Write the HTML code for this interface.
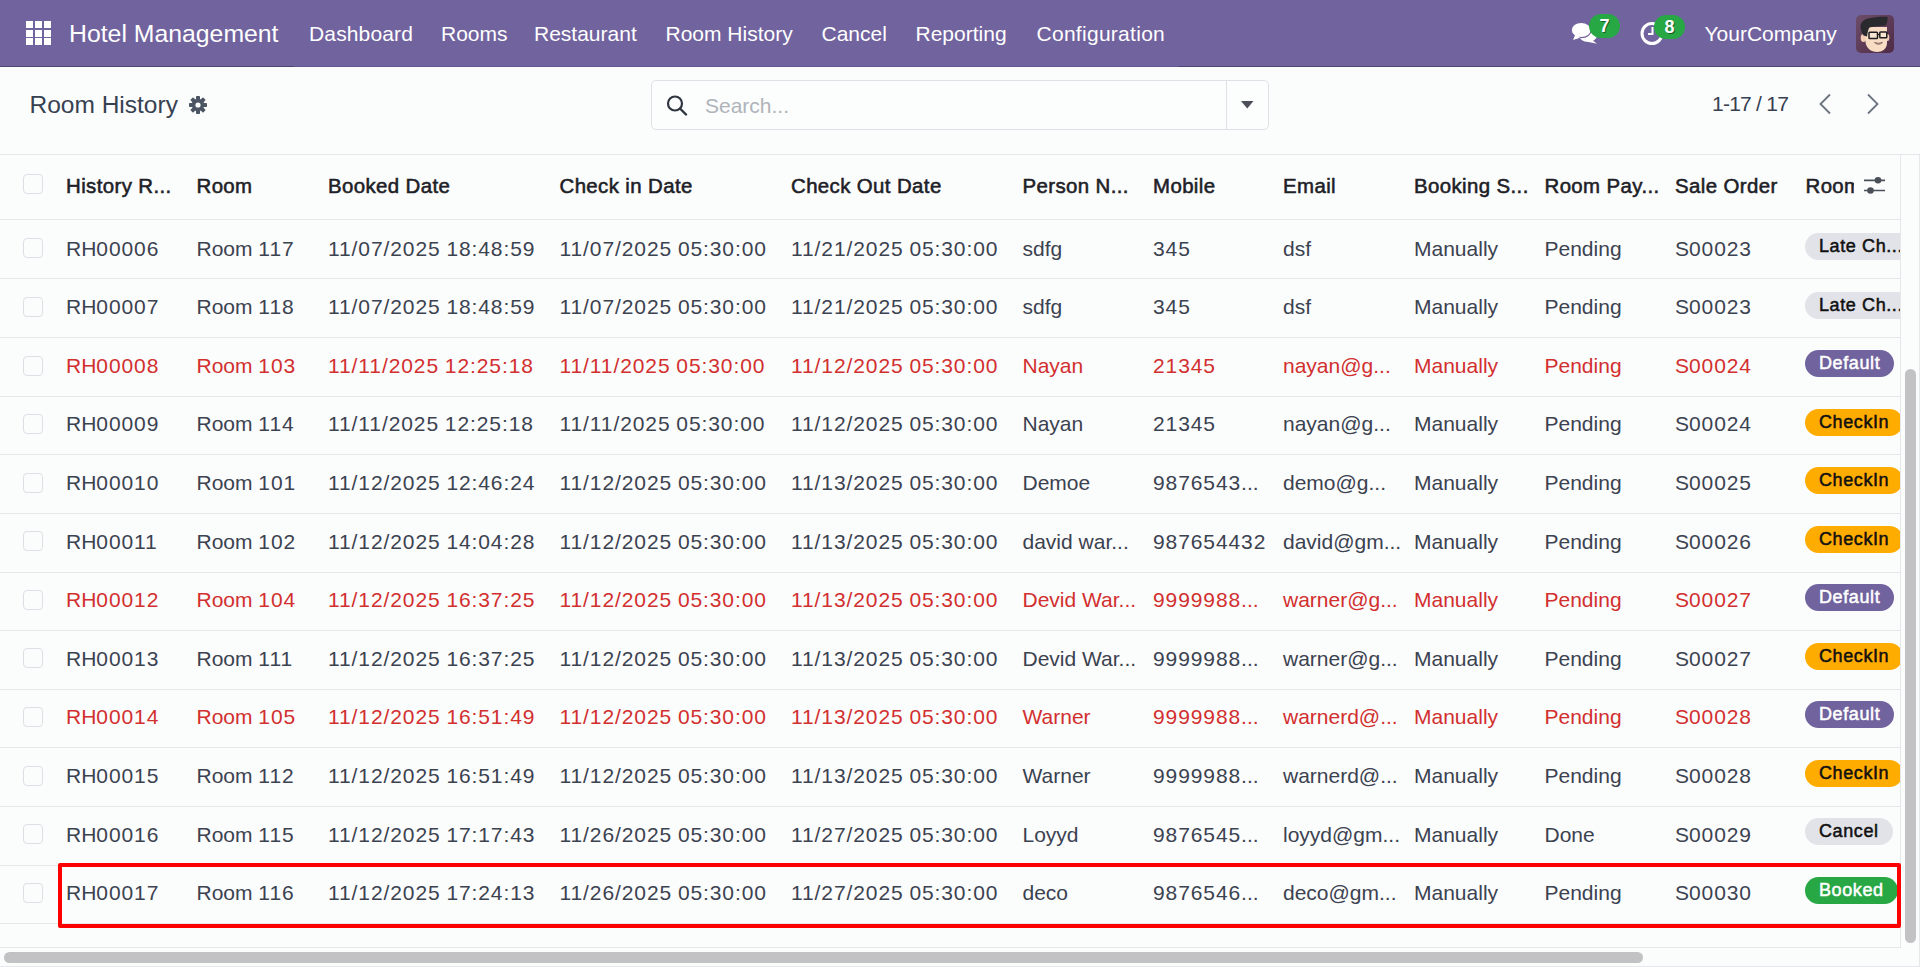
<!DOCTYPE html><html><head><meta charset="utf-8"><style>
*{box-sizing:border-box;margin:0;padding:0}
html,body{width:1920px;height:967px;overflow:hidden;background:#fbfcfc;font-family:"Liberation Sans",sans-serif;color:#3b4250}
.a{position:absolute;white-space:nowrap}
.nav{position:absolute;left:0;top:0;width:1920px;height:67px;background:#71639e}
.nt{position:absolute;color:#fff;font-size:21px;top:22px;line-height:24px}
.brand{font-size:24.8px;top:20px;line-height:28px}
.badge7{position:absolute;background:#28a745;border-radius:12px;color:#fff;font-weight:700;font-size:18px;text-align:center;line-height:24px;height:24px;width:31px;text-shadow:1px 1px 0 rgba(0,0,0,.45)}
.hl{position:absolute;left:0;width:1900px;height:1px;background:#e5e7eb}
.th{position:absolute;font-weight:400;font-size:20.4px;color:#1d2026;-webkit-text-stroke:0.55px #1d2026;letter-spacing:0.4px;top:173.5px;line-height:24px}
.td{position:absolute;font-size:21px;line-height:24px}
.cb{position:absolute;left:23px;width:20px;height:20px;border:1px solid #dcdfe4;border-radius:4px;background:transparent}
.bd{position:absolute;left:1805px;height:27px;border-radius:14px;font-weight:400;font-size:18px;line-height:27px;padding:0 14px;letter-spacing:0.6px;-webkit-text-stroke:0.5px currentColor}
.gray{background:#e1e3e8;color:#111}
.purple{background:#71639e;color:#fff}
.orange{background:#ffac00;color:#111}
.green{background:#28a745;color:#fff}
.red{color:#d22f2f}
.d{letter-spacing:0.9px}
</style></head><body>
<div class="nav"></div>
<div class="a" style="left:0;top:66px;width:294px;height:1px;background:#4f4573"></div>
<div class="a" style="left:294px;top:66px;width:885px;height:1px;background:#655892"></div>
<div class="a" style="left:1179px;top:66px;width:741px;height:1px;background:#4f4573"></div>
<svg class="a" style="left:26px;top:21px" width="26" height="26" viewBox="0 0 26 26"><rect x="0" y="0" width="7" height="7" fill="#fff"/><rect x="9" y="0" width="7" height="7" fill="#fff"/><rect x="18" y="0" width="7" height="7" fill="#fff"/><rect x="0" y="9" width="7" height="7" fill="#fff"/><rect x="9" y="9" width="7" height="7" fill="#fff"/><rect x="18" y="9" width="7" height="7" fill="#fff"/><rect x="0" y="17" width="7" height="7" fill="#fff"/><rect x="9" y="17" width="7" height="7" fill="#fff"/><rect x="18" y="17" width="7" height="7" fill="#fff"/></svg>
<div class="nt brand" style="left:69px">Hotel Management</div>
<div class="nt" style="left:309px;letter-spacing:0.15px">Dashboard</div>
<div class="nt" style="left:441px;letter-spacing:0px">Rooms</div>
<div class="nt" style="left:534px;letter-spacing:0px">Restaurant</div>
<div class="nt" style="left:665.5px;letter-spacing:0px">Room History</div>
<div class="nt" style="left:821.5px;letter-spacing:0px">Cancel</div>
<div class="nt" style="left:915.5px;letter-spacing:0px">Reporting</div>
<div class="nt" style="left:1036.5px;letter-spacing:0.28px">Configuration</div>
<svg class="a" style="left:1571px;top:22px" width="28" height="23" viewBox="0 0 28 23">
<ellipse cx="17" cy="13.3" rx="9" ry="6.5" fill="#fff"/><path d="M20.5 17.5 L26 21.8 L15 19.5 Z" fill="#fff"/>
<path d="M4.5 13 L2.3 17.8 L10 15.5 Z" fill="#fff"/><ellipse cx="10.2" cy="8" rx="10" ry="7.7" fill="#fff" stroke="#71639e" stroke-width="1.2"/><path d="M4.2 12.8 L2.3 17.8 L9.5 15.2 Z" fill="#fff"/></svg>
<div class="badge7" style="left:1589px;top:14px">7</div>
<svg class="a" style="left:1639.8px;top:20.6px" width="25" height="25" viewBox="0 0 25 25">
<circle cx="12" cy="12.5" r="10" fill="none" stroke="#fff" stroke-width="3"/><path d="M12.5 6 V13 H8" fill="none" stroke="#fff" stroke-width="2"/></svg>
<div class="badge7" style="left:1654px;top:15px">8</div>
<div class="nt" style="left:1704.5px">YourCompany</div>
<svg class="a" style="left:1856px;top:15px" width="38" height="38" viewBox="0 0 38 38">
<defs><linearGradient id="ag" x1="0" y1="0" x2="1" y2="1"><stop offset="0" stop-color="#6d4d69"/><stop offset="1" stop-color="#4f2b45"/></linearGradient></defs>
<rect width="38" height="38" rx="5" fill="url(#ag)"/>
<ellipse cx="7.5" cy="23" rx="2.8" ry="4" fill="#f3cdb5"/>
<ellipse cx="31.5" cy="22.5" rx="1.8" ry="3.5" fill="#f3cdb5"/>
<path d="M9.5 12 H31 V28 C31 34 26 37 21 37 C15 37 10 33 9.5 27 Z" fill="#f8dcc3"/>
<path d="M4.5 11 C5 7 8 4.5 12 3.5 C18 2 26 1.5 31.5 1.8 C32 5 31 8.5 29.5 10.5 C24 10.5 18 11.5 13.5 12.5 C12 14.5 11.5 18 11 21.5 L7.5 20.5 C5.5 17 4.3 14 4.5 11 Z" fill="#2a292e"/>
<rect x="13" y="17.3" width="8.5" height="6.2" rx="0.8" fill="#fff" fill-opacity=".25" stroke="#1e1e22" stroke-width="1.5"/>
<rect x="23.8" y="17" width="7" height="5.8" rx="0.8" fill="#fff" fill-opacity=".25" stroke="#1e1e22" stroke-width="1.5"/>
<path d="M21.5 19.5 H23.8" stroke="#1e1e22" stroke-width="1.2"/>
<path d="M18.5 27.5 Q22.5 31 26.5 27.5 Q22.5 29 18.5 27.5 Z" fill="#b9b2ad" stroke="#7a5b55" stroke-width=".8"/>
</svg>
<div class="a" style="left:29.5px;top:90.5px;font-size:24.5px;line-height:28px;color:#374151">Room History</div>
<svg class="a" style="left:189px;top:96px" width="18" height="18" viewBox="0 0 18 18">
<g fill="#4b5563" transform="translate(9 9)">
<circle r="6.2"/>
<rect x="-2" y="-9" width="4" height="4" rx="0.8" transform="rotate(0)"/><rect x="-2" y="-9" width="4" height="4" rx="0.8" transform="rotate(45)"/><rect x="-2" y="-9" width="4" height="4" rx="0.8" transform="rotate(90)"/><rect x="-2" y="-9" width="4" height="4" rx="0.8" transform="rotate(135)"/><rect x="-2" y="-9" width="4" height="4" rx="0.8" transform="rotate(180)"/><rect x="-2" y="-9" width="4" height="4" rx="0.8" transform="rotate(225)"/><rect x="-2" y="-9" width="4" height="4" rx="0.8" transform="rotate(270)"/><rect x="-2" y="-9" width="4" height="4" rx="0.8" transform="rotate(315)"/>
</g><circle cx="9" cy="9" r="2.6" fill="#fbfcfc"/></svg>
<div class="a" style="left:651px;top:80px;width:618px;height:50px;border:1px solid #dfe1e6;border-radius:5px;background:#fcfdfd"></div>
<div class="a" style="left:1226px;top:80px;width:1px;height:50px;background:#dfe1e6"></div>
<svg class="a" style="left:666px;top:95px" width="22" height="21" viewBox="0 0 22 21">
<circle cx="9" cy="8.5" r="7" fill="none" stroke="#2f3640" stroke-width="2.2"/><path d="M14 13.5 L20 19.5" stroke="#2f3640" stroke-width="2.4" stroke-linecap="round"/></svg>
<div class="a" style="left:705px;top:93.6px;font-size:21px;line-height:24px;color:#b0b3ba">Search...</div>
<svg class="a" style="left:1241px;top:101px" width="13" height="8" viewBox="0 0 13 8"><path d="M0 0 H12.5 L6.25 7.5 Z" fill="#4a4f59"/></svg>
<div class="a" style="left:1712px;top:92px;font-size:21px;line-height:24px;color:#374151;letter-spacing:-0.75px">1-17 / 17</div>
<svg class="a" style="left:1818px;top:93px" width="14" height="22" viewBox="0 0 14 22"><path d="M12 1.5 L2.5 11 L12 20.5" fill="none" stroke="#6b7280" stroke-width="1.8"/></svg>
<svg class="a" style="left:1866px;top:93px" width="14" height="22" viewBox="0 0 14 22"><path d="M2 1.5 L11.5 11 L2 20.5" fill="none" stroke="#6b7280" stroke-width="1.8"/></svg>
<div class="hl" style="top:154px;width:1920px;z-index:2"></div>
<div class="hl" style="top:219px"></div>
<div class="cb" style="top:174px"></div>
<div class="th" style="left:66px">History R...</div>
<div class="th" style="left:196.5px">Room</div>
<div class="th" style="left:328px">Booked Date</div>
<div class="th" style="left:559.5px">Check in Date</div>
<div class="th" style="left:791px">Check Out Date</div>
<div class="th" style="left:1022.5px">Person N...</div>
<div class="th" style="left:1153px">Mobile</div>
<div class="th" style="left:1283px">Email</div>
<div class="th" style="left:1414px">Booking S...</div>
<div class="th" style="left:1544.5px">Room Pay...</div>
<div class="th" style="left:1675px">Sale Order</div>
<div class="th" style="left:1805.5px;width:48px;overflow:hidden">Room</div>
<svg class="a" style="left:1864px;top:176px" width="22" height="18" viewBox="0 0 22 18">
<path d="M0 4.3 H21 M0 14.5 H21" stroke="#4a4f58" stroke-width="1.7"/><circle cx="14" cy="4.3" r="3.3" fill="#4a4f58"/><circle cx="6.5" cy="14.5" r="3.3" fill="#4a4f58"/></svg>
<div class="hl" style="top:278px"></div>
<div class="cb" style="top:238px"></div>
<div class="td" style="left:66px;top:236.5px">RH<span class="d">00006</span></div>
<div class="td" style="left:196.5px;top:236.5px">Room <span class="d">117</span></div>
<div class="td" style="left:328px;top:236.5px"><span class="d">11/07/2025</span> <span class="d">18:48:59</span></div>
<div class="td" style="left:559.5px;top:236.5px"><span class="d">11/07/2025</span> <span class="d">05:30:00</span></div>
<div class="td" style="left:791px;top:236.5px"><span class="d">11/21/2025</span> <span class="d">05:30:00</span></div>
<div class="td" style="left:1022.5px;top:236.5px">sdfg</div>
<div class="td" style="left:1153px;top:236.5px"><span class="d">345</span></div>
<div class="td" style="left:1283px;top:236.5px">dsf</div>
<div class="td" style="left:1414px;top:236.5px">Manually</div>
<div class="td" style="left:1544.5px;top:236.5px">Pending</div>
<div class="td" style="left:1675px;top:236.5px">S<span class="d">00023</span></div>
<div class="bd gray" style="top:233.1px">Late Ch...</div>
<div class="hl" style="top:337px"></div>
<div class="cb" style="top:297px"></div>
<div class="td" style="left:66px;top:295.1px">RH<span class="d">00007</span></div>
<div class="td" style="left:196.5px;top:295.1px">Room <span class="d">118</span></div>
<div class="td" style="left:328px;top:295.1px"><span class="d">11/07/2025</span> <span class="d">18:48:59</span></div>
<div class="td" style="left:559.5px;top:295.1px"><span class="d">11/07/2025</span> <span class="d">05:30:00</span></div>
<div class="td" style="left:791px;top:295.1px"><span class="d">11/21/2025</span> <span class="d">05:30:00</span></div>
<div class="td" style="left:1022.5px;top:295.1px">sdfg</div>
<div class="td" style="left:1153px;top:295.1px"><span class="d">345</span></div>
<div class="td" style="left:1283px;top:295.1px">dsf</div>
<div class="td" style="left:1414px;top:295.1px">Manually</div>
<div class="td" style="left:1544.5px;top:295.1px">Pending</div>
<div class="td" style="left:1675px;top:295.1px">S<span class="d">00023</span></div>
<div class="bd gray" style="top:291.6px">Late Ch...</div>
<div class="hl" style="top:396px"></div>
<div class="cb" style="top:356px"></div>
<div class="td red" style="left:66px;top:353.7px">RH<span class="d">00008</span></div>
<div class="td red" style="left:196.5px;top:353.7px">Room <span class="d">103</span></div>
<div class="td red" style="left:328px;top:353.7px"><span class="d">11/11/2025</span> <span class="d">12:25:18</span></div>
<div class="td red" style="left:559.5px;top:353.7px"><span class="d">11/11/2025</span> <span class="d">05:30:00</span></div>
<div class="td red" style="left:791px;top:353.7px"><span class="d">11/12/2025</span> <span class="d">05:30:00</span></div>
<div class="td red" style="left:1022.5px;top:353.7px">Nayan</div>
<div class="td red" style="left:1153px;top:353.7px"><span class="d">21345</span></div>
<div class="td red" style="left:1283px;top:353.7px">nayan@g...</div>
<div class="td red" style="left:1414px;top:353.7px">Manually</div>
<div class="td red" style="left:1544.5px;top:353.7px">Pending</div>
<div class="td red" style="left:1675px;top:353.7px">S<span class="d">00024</span></div>
<div class="bd purple" style="top:350.2px">Default</div>
<div class="hl" style="top:454px"></div>
<div class="cb" style="top:414px"></div>
<div class="td" style="left:66px;top:412.3px">RH<span class="d">00009</span></div>
<div class="td" style="left:196.5px;top:412.3px">Room <span class="d">114</span></div>
<div class="td" style="left:328px;top:412.3px"><span class="d">11/11/2025</span> <span class="d">12:25:18</span></div>
<div class="td" style="left:559.5px;top:412.3px"><span class="d">11/11/2025</span> <span class="d">05:30:00</span></div>
<div class="td" style="left:791px;top:412.3px"><span class="d">11/12/2025</span> <span class="d">05:30:00</span></div>
<div class="td" style="left:1022.5px;top:412.3px">Nayan</div>
<div class="td" style="left:1153px;top:412.3px"><span class="d">21345</span></div>
<div class="td" style="left:1283px;top:412.3px">nayan@g...</div>
<div class="td" style="left:1414px;top:412.3px">Manually</div>
<div class="td" style="left:1544.5px;top:412.3px">Pending</div>
<div class="td" style="left:1675px;top:412.3px">S<span class="d">00024</span></div>
<div class="bd orange" style="top:408.7px">CheckIn</div>
<div class="hl" style="top:513px"></div>
<div class="cb" style="top:473px"></div>
<div class="td" style="left:66px;top:470.9px">RH<span class="d">00010</span></div>
<div class="td" style="left:196.5px;top:470.9px">Room <span class="d">101</span></div>
<div class="td" style="left:328px;top:470.9px"><span class="d">11/12/2025</span> <span class="d">12:46:24</span></div>
<div class="td" style="left:559.5px;top:470.9px"><span class="d">11/12/2025</span> <span class="d">05:30:00</span></div>
<div class="td" style="left:791px;top:470.9px"><span class="d">11/13/2025</span> <span class="d">05:30:00</span></div>
<div class="td" style="left:1022.5px;top:470.9px">Demoe</div>
<div class="td" style="left:1153px;top:470.9px"><span class="d">9876543</span>...</div>
<div class="td" style="left:1283px;top:470.9px">demo@g...</div>
<div class="td" style="left:1414px;top:470.9px">Manually</div>
<div class="td" style="left:1544.5px;top:470.9px">Pending</div>
<div class="td" style="left:1675px;top:470.9px">S<span class="d">00025</span></div>
<div class="bd orange" style="top:467.2px">CheckIn</div>
<div class="hl" style="top:572px"></div>
<div class="cb" style="top:531px"></div>
<div class="td" style="left:66px;top:529.5px">RH<span class="d">00011</span></div>
<div class="td" style="left:196.5px;top:529.5px">Room <span class="d">102</span></div>
<div class="td" style="left:328px;top:529.5px"><span class="d">11/12/2025</span> <span class="d">14:04:28</span></div>
<div class="td" style="left:559.5px;top:529.5px"><span class="d">11/12/2025</span> <span class="d">05:30:00</span></div>
<div class="td" style="left:791px;top:529.5px"><span class="d">11/13/2025</span> <span class="d">05:30:00</span></div>
<div class="td" style="left:1022.5px;top:529.5px">david war...</div>
<div class="td" style="left:1153px;top:529.5px"><span class="d">987654432</span></div>
<div class="td" style="left:1283px;top:529.5px">david@gm...</div>
<div class="td" style="left:1414px;top:529.5px">Manually</div>
<div class="td" style="left:1544.5px;top:529.5px">Pending</div>
<div class="td" style="left:1675px;top:529.5px">S<span class="d">00026</span></div>
<div class="bd orange" style="top:525.8px">CheckIn</div>
<div class="hl" style="top:630px"></div>
<div class="cb" style="top:590px"></div>
<div class="td red" style="left:66px;top:588.1px">RH<span class="d">00012</span></div>
<div class="td red" style="left:196.5px;top:588.1px">Room <span class="d">104</span></div>
<div class="td red" style="left:328px;top:588.1px"><span class="d">11/12/2025</span> <span class="d">16:37:25</span></div>
<div class="td red" style="left:559.5px;top:588.1px"><span class="d">11/12/2025</span> <span class="d">05:30:00</span></div>
<div class="td red" style="left:791px;top:588.1px"><span class="d">11/13/2025</span> <span class="d">05:30:00</span></div>
<div class="td red" style="left:1022.5px;top:588.1px">Devid War...</div>
<div class="td red" style="left:1153px;top:588.1px"><span class="d">9999988</span>...</div>
<div class="td red" style="left:1283px;top:588.1px">warner@g...</div>
<div class="td red" style="left:1414px;top:588.1px">Manually</div>
<div class="td red" style="left:1544.5px;top:588.1px">Pending</div>
<div class="td red" style="left:1675px;top:588.1px">S<span class="d">00027</span></div>
<div class="bd purple" style="top:584.3px">Default</div>
<div class="hl" style="top:689px"></div>
<div class="cb" style="top:648px"></div>
<div class="td" style="left:66px;top:646.7px">RH<span class="d">00013</span></div>
<div class="td" style="left:196.5px;top:646.7px">Room <span class="d">111</span></div>
<div class="td" style="left:328px;top:646.7px"><span class="d">11/12/2025</span> <span class="d">16:37:25</span></div>
<div class="td" style="left:559.5px;top:646.7px"><span class="d">11/12/2025</span> <span class="d">05:30:00</span></div>
<div class="td" style="left:791px;top:646.7px"><span class="d">11/13/2025</span> <span class="d">05:30:00</span></div>
<div class="td" style="left:1022.5px;top:646.7px">Devid War...</div>
<div class="td" style="left:1153px;top:646.7px"><span class="d">9999988</span>...</div>
<div class="td" style="left:1283px;top:646.7px">warner@g...</div>
<div class="td" style="left:1414px;top:646.7px">Manually</div>
<div class="td" style="left:1544.5px;top:646.7px">Pending</div>
<div class="td" style="left:1675px;top:646.7px">S<span class="d">00027</span></div>
<div class="bd orange" style="top:642.8px">CheckIn</div>
<div class="hl" style="top:747px"></div>
<div class="cb" style="top:707px"></div>
<div class="td red" style="left:66px;top:705.3px">RH<span class="d">00014</span></div>
<div class="td red" style="left:196.5px;top:705.3px">Room <span class="d">105</span></div>
<div class="td red" style="left:328px;top:705.3px"><span class="d">11/12/2025</span> <span class="d">16:51:49</span></div>
<div class="td red" style="left:559.5px;top:705.3px"><span class="d">11/12/2025</span> <span class="d">05:30:00</span></div>
<div class="td red" style="left:791px;top:705.3px"><span class="d">11/13/2025</span> <span class="d">05:30:00</span></div>
<div class="td red" style="left:1022.5px;top:705.3px">Warner</div>
<div class="td red" style="left:1153px;top:705.3px"><span class="d">9999988</span>...</div>
<div class="td red" style="left:1283px;top:705.3px">warnerd@...</div>
<div class="td red" style="left:1414px;top:705.3px">Manually</div>
<div class="td red" style="left:1544.5px;top:705.3px">Pending</div>
<div class="td red" style="left:1675px;top:705.3px">S<span class="d">00028</span></div>
<div class="bd purple" style="top:701.3px">Default</div>
<div class="hl" style="top:806px"></div>
<div class="cb" style="top:766px"></div>
<div class="td" style="left:66px;top:763.9px">RH<span class="d">00015</span></div>
<div class="td" style="left:196.5px;top:763.9px">Room <span class="d">112</span></div>
<div class="td" style="left:328px;top:763.9px"><span class="d">11/12/2025</span> <span class="d">16:51:49</span></div>
<div class="td" style="left:559.5px;top:763.9px"><span class="d">11/12/2025</span> <span class="d">05:30:00</span></div>
<div class="td" style="left:791px;top:763.9px"><span class="d">11/13/2025</span> <span class="d">05:30:00</span></div>
<div class="td" style="left:1022.5px;top:763.9px">Warner</div>
<div class="td" style="left:1153px;top:763.9px"><span class="d">9999988</span>...</div>
<div class="td" style="left:1283px;top:763.9px">warnerd@...</div>
<div class="td" style="left:1414px;top:763.9px">Manually</div>
<div class="td" style="left:1544.5px;top:763.9px">Pending</div>
<div class="td" style="left:1675px;top:763.9px">S<span class="d">00028</span></div>
<div class="bd orange" style="top:759.9px">CheckIn</div>
<div class="hl" style="top:865px"></div>
<div class="cb" style="top:824px"></div>
<div class="td" style="left:66px;top:822.5px">RH<span class="d">00016</span></div>
<div class="td" style="left:196.5px;top:822.5px">Room <span class="d">115</span></div>
<div class="td" style="left:328px;top:822.5px"><span class="d">11/12/2025</span> <span class="d">17:17:43</span></div>
<div class="td" style="left:559.5px;top:822.5px"><span class="d">11/26/2025</span> <span class="d">05:30:00</span></div>
<div class="td" style="left:791px;top:822.5px"><span class="d">11/27/2025</span> <span class="d">05:30:00</span></div>
<div class="td" style="left:1022.5px;top:822.5px">Loyyd</div>
<div class="td" style="left:1153px;top:822.5px"><span class="d">9876545</span>...</div>
<div class="td" style="left:1283px;top:822.5px">loyyd@gm...</div>
<div class="td" style="left:1414px;top:822.5px">Manually</div>
<div class="td" style="left:1544.5px;top:822.5px">Done</div>
<div class="td" style="left:1675px;top:822.5px">S<span class="d">00029</span></div>
<div class="bd gray" style="top:818.4px">Cancel</div>
<div class="hl" style="top:923px"></div>
<div class="cb" style="top:883px"></div>
<div class="td" style="left:66px;top:881.1px">RH<span class="d">00017</span></div>
<div class="td" style="left:196.5px;top:881.1px">Room <span class="d">116</span></div>
<div class="td" style="left:328px;top:881.1px"><span class="d">11/12/2025</span> <span class="d">17:24:13</span></div>
<div class="td" style="left:559.5px;top:881.1px"><span class="d">11/26/2025</span> <span class="d">05:30:00</span></div>
<div class="td" style="left:791px;top:881.1px"><span class="d">11/27/2025</span> <span class="d">05:30:00</span></div>
<div class="td" style="left:1022.5px;top:881.1px">deco</div>
<div class="td" style="left:1153px;top:881.1px"><span class="d">9876546</span>...</div>
<div class="td" style="left:1283px;top:881.1px">deco@gm...</div>
<div class="td" style="left:1414px;top:881.1px">Manually</div>
<div class="td" style="left:1544.5px;top:881.1px">Pending</div>
<div class="td" style="left:1675px;top:881.1px">S<span class="d">00030</span></div>
<div class="bd green" style="top:876.9px">Booked</div>
<div class="a" style="left:1900px;top:154px;width:20px;height:813px;background:#fbfcfc"></div>
<div class="a" style="left:1900px;top:154px;width:1px;height:793px;background:#e5e7eb"></div>
<div class="hl" style="top:947px;width:1901px"></div>
<div class="a" style="left:1905px;top:369px;width:11px;height:574px;border-radius:6px;background:#c2c2c5"></div>
<div class="a" style="left:4px;top:952px;width:1639px;height:11px;border-radius:6px;background:#c2c2c5"></div>
<div class="a" style="left:1919px;top:154px;width:1px;height:813px;background:#e5e7eb"></div>
<div class="a" style="left:0;top:966px;width:1920px;height:1px;background:#e5e7eb"></div>
<div class="a" style="left:58px;top:863px;width:1843px;height:65px;border:4px solid #ff0000;border-radius:2px"></div>
</body></html>
